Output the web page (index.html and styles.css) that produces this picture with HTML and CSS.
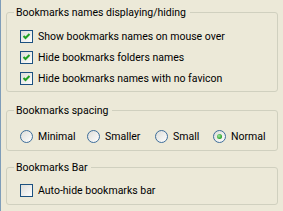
FILE: index.html
```html
<!DOCTYPE html>
<html lang="en">
<head>
    <meta charset="UTF-8">
    <title>Bookmarks options</title>
    <link rel="stylesheet" href="styles.css">
</head>
<body>
    <svg class="defs" width="0" height="0" aria-hidden="true">
        <defs>
            <linearGradient id="boxFill" x1="0" y1="0" x2="1" y2="1">
                <stop offset="0" stop-color="#dcdcd7"/>
                <stop offset="1" stop-color="#ffffff"/>
            </linearGradient>
            <radialGradient id="dotFill" cx="0.4" cy="0.4" r="0.6">
                <stop offset="0" stop-color="#a6e6a6"/>
                <stop offset="1" stop-color="#21a121"/>
            </radialGradient>
        </defs>
    </svg>

    <div class="page">
        <fieldset class="group">
            <legend>Bookmarks names displaying/hiding</legend>
            <div class="opts">
                <label class="opt">
                    <svg class="ctl" viewBox="0 0 13 13"><rect x="0.5" y="0.5" width="12" height="12" fill="url(#boxFill)" stroke="#1c5180"/><polyline points="3.5,6 5.5,8 9.5,4" fill="none" stroke="#21a121" stroke-width="2"/></svg>
                    <span>Show bookmarks names on mouse over</span>
                </label>
                <label class="opt">
                    <svg class="ctl" viewBox="0 0 13 13"><rect x="0.5" y="0.5" width="12" height="12" fill="url(#boxFill)" stroke="#1c5180"/><polyline points="3.5,6 5.5,8 9.5,4" fill="none" stroke="#21a121" stroke-width="2"/></svg>
                    <span>Hide bookmarks folders names</span>
                </label>
                <label class="opt">
                    <svg class="ctl" viewBox="0 0 13 13"><rect x="0.5" y="0.5" width="12" height="12" fill="url(#boxFill)" stroke="#1c5180"/><polyline points="3.5,6 5.5,8 9.5,4" fill="none" stroke="#21a121" stroke-width="2"/></svg>
                    <span>Hide bookmarks names with no favicon</span>
                </label>
            </div>
        </fieldset>

        <fieldset class="group spacing">
            <legend>Bookmarks spacing</legend>
            <div class="opts radios">
                <label class="opt">
                    <svg class="ctl" viewBox="0 0 13 13"><circle cx="6.5" cy="6.5" r="6" fill="url(#boxFill)" stroke="#3d6d99"/></svg>
                    <span>Minimal</span>
                </label>
                <label class="opt">
                    <svg class="ctl" viewBox="0 0 13 13"><circle cx="6.5" cy="6.5" r="6" fill="url(#boxFill)" stroke="#3d6d99"/></svg>
                    <span>Smaller</span>
                </label>
                <label class="opt">
                    <svg class="ctl" viewBox="0 0 13 13"><circle cx="6.5" cy="6.5" r="6" fill="url(#boxFill)" stroke="#3d6d99"/></svg>
                    <span>Small</span>
                </label>
                <label class="opt">
                    <svg class="ctl" viewBox="0 0 13 13"><circle cx="6.5" cy="6.5" r="6" fill="url(#boxFill)" stroke="#3d6d99"/><circle cx="6.5" cy="6.5" r="2.5" fill="url(#dotFill)"/></svg>
                    <span>Normal</span>
                </label>
            </div>
        </fieldset>

        <fieldset class="group bar">
            <legend>Bookmarks Bar</legend>
            <div class="opts">
                <label class="opt">
                    <svg class="ctl" viewBox="0 0 13 13"><rect x="0.5" y="0.5" width="12" height="12" fill="url(#boxFill)" stroke="#1c5180"/></svg>
                    <span>Auto-hide bookmarks bar</span>
                </label>
            </div>
        </fieldset>
    </div>
</body>
</html>
```

FILE: styles.css
```css
html, body {
    margin: 0;
    height: 100%;
}

body {
    background-color: #ece9d8;
    color: #000;
    font-family: Roboto, "Liberation Sans", Arial, sans-serif;
    font-size: 10.5px;
    overflow: hidden;
}

.defs {
    position: absolute;
    width: 0;
    height: 0;
}

.page {
    box-sizing: border-box;
    height: 100%;
    border-left: 1px solid #7f9db9;
    padding: 6px 5px 0 5px;
}

.group {
    margin: 0;
    border: 1px solid #d0d0bf;
    border-radius: 3px;
    padding: 7px 7px 2px;
}

.group legend {
    padding: 0 4px 0 2px;
    line-height: 13px;
}

.spacing {
    margin-top: 12px;
    padding-top: 9px;
    padding-bottom: 3px;
}

.bar {
    margin-top: 10px;
    padding-top: 6px;
    padding-bottom: 3px;
}

.opts {
    padding-left: 6px;
}

.opt {
    display: flex;
    align-items: center;
    gap: 5px;
    height: 21px;
}

.ctl {
    width: 13px;
    height: 13px;
    flex: none;
}

.radios {
    display: grid;
    grid-template-columns: 67px 68px 58px auto;
}
```
